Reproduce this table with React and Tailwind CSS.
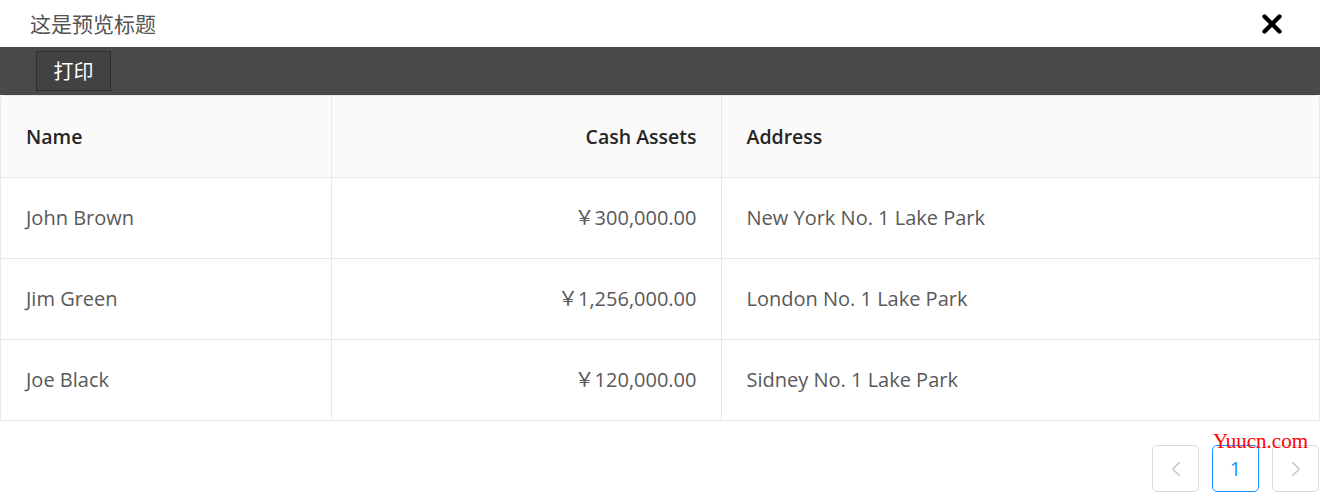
import { X, ChevronLeft, ChevronRight } from 'lucide-react'

const rows = [
  { key: '1', name: 'John Brown', money: '￥300,000.00', address: 'New York No. 1 Lake Park' },
  { key: '2', name: 'Jim Green', money: '￥1,256,000.00', address: 'London No. 1 Lake Park' },
  { key: '3', name: 'Joe Black', money: '￥120,000.00', address: 'Sidney No. 1 Lake Park' },
]

export default function App() {
  return (
    <div
      className="w-[1320px] h-[497px] bg-white overflow-hidden"
      style={{ fontFamily: '"Segoe UI", "Open Sans", "Noto Sans CJK SC", sans-serif' }}
    >
      {/* title */}
      <div className="h-[47px] flex items-center justify-between pl-[30px] pr-[33px]">
        <span className="text-[21px] text-[#555]" style={{ fontFamily: '"Noto Sans CJK SC", sans-serif' }}>这是预览标题</span>
        <X size={30} strokeWidth={3.5} className="text-black" />
      </div>

      {/* toolbar */}
      <div className="h-[48px] bg-[#494949] flex items-start pl-[36px] pt-[4px]">
        <button
          className="w-[75px] h-[40px] bg-[#424242] border border-[#2e2e2e] text-white text-[20px] flex items-center justify-center"
          style={{ fontFamily: '"Noto Sans CJK SC", sans-serif' }}
        >
          打印
        </button>
      </div>

      {/* table */}
      <div className="border border-[#e8e8e8] rounded-tl-[4px] rounded-tr-[4px] overflow-hidden">
        <table className="w-full border-collapse table-fixed">
          <colgroup>
            <col className="w-[330px]" />
            <col className="w-[390px]" />
            <col />
          </colgroup>
          <thead>
            <tr className="h-[81px] bg-[#fafafa] text-[19.5px] text-[#262626]">
              <th className="text-left pl-[25px] border-r border-b border-[#e8e8e8] font-semibold">Name</th>
              <th className="text-right pr-[24px] border-r border-b border-[#e8e8e8] font-semibold">Cash Assets</th>
              <th className="text-left pl-[25px] border-b border-[#e8e8e8] font-semibold">Address</th>
            </tr>
          </thead>
          <tbody>
            {rows.map((r, i) => (
              <tr key={r.key} className="h-[81px] text-[20px] text-[#595959]">
                <td className={`pl-[25px] border-r border-[#e8e8e8] ${i < 2 ? 'border-b' : ''}`}>{r.name}</td>
                <td className={`text-right pr-[24px] border-r border-[#e8e8e8] ${i < 2 ? 'border-b' : ''}`}>{r.money}</td>
                <td className={`pl-[25px] border-[#e8e8e8] ${i < 2 ? 'border-b' : ''}`}>{r.address}</td>
              </tr>
            ))}
          </tbody>
        </table>
      </div>

      {/* pagination */}
      <div className="relative flex justify-end gap-[13px] pt-[24px] pr-[1px]">
        <span
          className="absolute right-[12px] top-[10px] text-[21px] text-[#f00] leading-none"
          style={{ fontFamily: '"Liberation Serif", serif' }}
        >
          Yuucn.com
        </span>
        <div className="w-[47px] h-[47px] rounded-[5px] border border-[#d9d9d9] flex items-center justify-center text-[#c4c4c4]">
          <ChevronLeft size={26} strokeWidth={1.3} />
        </div>
        <div className="w-[47px] h-[47px] rounded-[5px] border border-[#1890ff] flex items-center justify-center text-[#1890ff] text-[20px]">
          1
        </div>
        <div className="w-[47px] h-[47px] rounded-[5px] border border-[#d9d9d9] flex items-center justify-center text-[#c4c4c4]">
          <ChevronRight size={26} strokeWidth={1.3} />
        </div>
      </div>
    </div>
  )
}
